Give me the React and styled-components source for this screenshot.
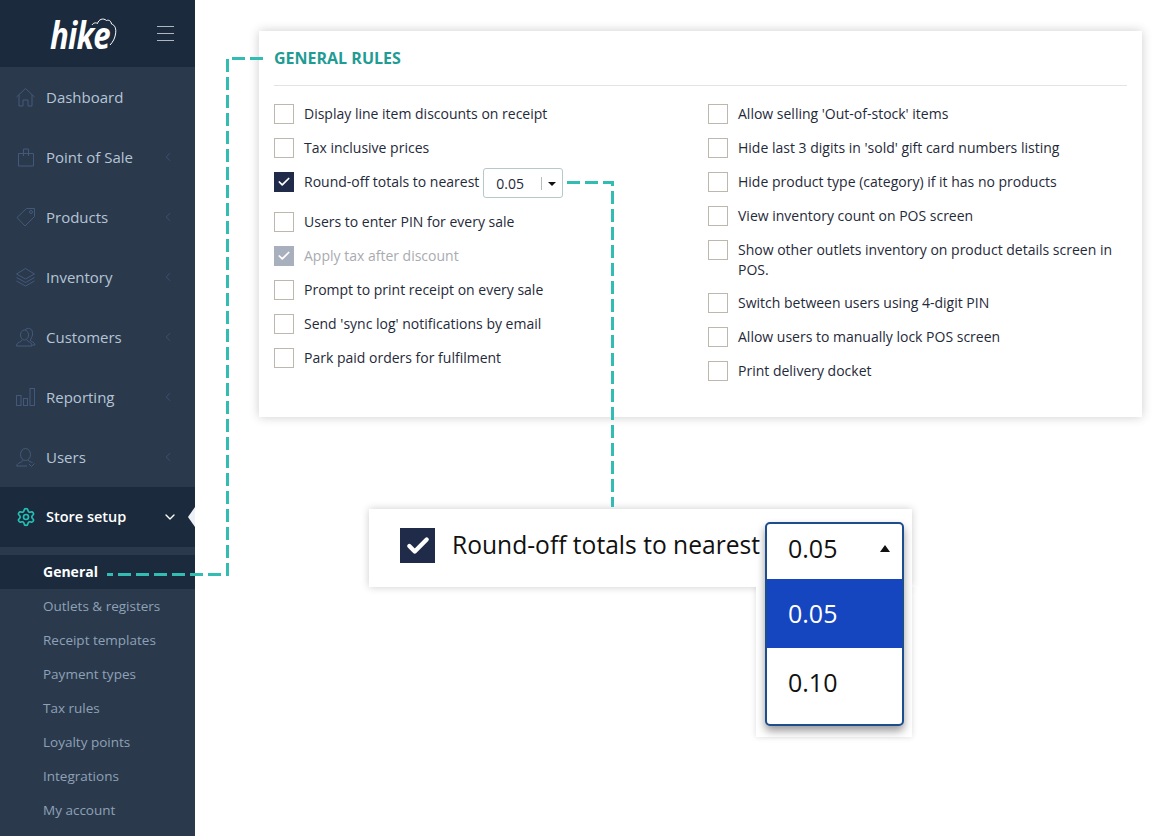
import styled, { createGlobalStyle } from "styled-components";
import { ChevronLeft, ChevronDown, Check, Settings } from "lucide-react";

const GlobalStyle = createGlobalStyle`
  html, body {
    margin: 0;
    padding: 0;
    background: #fff;
    font-family: "Open Sans", "Liberation Sans", sans-serif;
  }
`;

// thin outline icons used in the sidebar
const Icon = ({ children }) => (
  <svg width="20" height="20" viewBox="0 0 20 20" fill="none" stroke="#44597a" strokeWidth="1">
    {children}
  </svg>
);

const HomeIcon = () => (
  <Icon>
    <path d="M0.5 10 L9.5 1.5 L18.5 10" />
    <path d="M3 8 V19 H7 V13 H12 V19 H16 V8" />
  </Icon>
);

const BagIcon = () => (
  <Icon>
    <path d="M2.5 6.5 H17.5 V19 H2.5 Z" />
    <path d="M7.5 9 V2 H12.5 V9" />
  </Icon>
);

const TagIcon = () => (
  <Icon>
    <path d="M1 10.5 L10.5 1.5 H18.5 V9.5 L9 19 Z" />
    <circle cx="15" cy="5" r="1.5" />
  </Icon>
);

const LayersIcon = () => (
  <Icon>
    <path d="M0.5 7 L9.5 1.5 L18.5 7 L9.5 12 Z" />
    <path d="M0.5 10.5 L9.5 15.5 L18.5 10.5" />
    <path d="M0.5 14 L9.5 19 L18.5 14" />
  </Icon>
);

const CustomersIcon = () => (
  <Icon>
    <ellipse cx="8.5" cy="8" rx="4" ry="5" />
    <path d="M6 13 C6 15 1 15 0.5 18 V19 H16 V18 C16 15 11 15 11 13" />
    <path d="M9 3 C10 1.5 12 1 13.5 1.5 C16 2 17 5 16.5 8 C16 10 15 12 14 13 C15 15 19 15 19 18 H16.5" />
  </Icon>
);

const BarsIcon = () => (
  <Icon>
    <rect x="0.5" y="8.5" width="4.5" height="10" />
    <rect x="7.5" y="11.5" width="4" height="7" />
    <rect x="14" y="1.5" width="4.5" height="17" />
  </Icon>
);

const UserIcon = () => (
  <Icon>
    <ellipse cx="9.5" cy="7.5" rx="5" ry="6" />
    <path d="M7 13 C7 15.5 1 15.5 0.5 19 H11" />
    <path d="M12 13 C12.5 14.5 15 15 16.5 15.5" />
    <path d="M13 17 L15.5 19.5 L18.5 16.5" />
  </Icon>
);

const menu = [
  { name: "Dashboard", icon: HomeIcon },
  { name: "Point of Sale", icon: BagIcon, arrow: true },
  { name: "Products", icon: TagIcon, arrow: true },
  { name: "Inventory", icon: LayersIcon, arrow: true },
  { name: "Customers", icon: CustomersIcon, arrow: true },
  { name: "Reporting", icon: BarsIcon, arrow: true },
  { name: "Users", icon: UserIcon, arrow: true },
];

const subMenu = ["Outlets & registers", "Receipt templates", "Payment types", "Tax rules", "Loyalty points", "Integrations", "My account"];

const leftRules = [
  { label: "Display line item discounts on receipt" },
  { label: "Tax inclusive prices" },
  { label: "Round-off totals to nearest", checked: true, select: true },
  { label: "Users to enter PIN for every sale" },
  { label: "Apply tax after discount", disabled: true },
  { label: "Prompt to print receipt on every sale" },
  { label: "Send 'sync log' notifications by email" },
  { label: "Park paid orders for fulfilment" },
];

const rightRules = [
  "Allow selling 'Out-of-stock' items",
  "Hide last 3 digits in 'sold' gift card numbers listing",
  "Hide product type (category) if it has no products",
  "View inventory count on POS screen",
  "Show other outlets inventory on product details screen in POS.",
  "Switch between users using 4-digit PIN",
  "Allow users to manually lock POS screen",
  "Print delivery docket",
];

const App = () => {
  return (
    <Page>
      <GlobalStyle />
      <Sidebar>
        <Brand>
          <Logo>
            <LogoText>hike</LogoText>
            <svg width="26" height="30" viewBox="0 0 26 30" fill="none" stroke="#fff" strokeWidth="1">
              <path d="M1 8 C2.5 5.5 5 5.5 6.5 6.5 C7.5 2.5 12 0.5 15.5 3.5 C18 2.5 20 4 20.5 7 C24 8 25.5 12 24.5 17 C24 21 22 25 19 28" />
            </svg>
          </Logo>
          <Burger>
            <span />
            <span />
            <span />
          </Burger>
        </Brand>
        {menu.map((item) => (
          <NavItem key={item.name}>
            <item.icon />
            <NavLabel>{item.name}</NavLabel>
            {item.arrow && <ChevronLeft size={14} strokeWidth={1.3} color="#44597a" />}
          </NavItem>
        ))}
        <ActiveItem>
          <Settings size={20} strokeWidth={2} color="#22c1b4" />
          <ActiveLabel>Store setup</ActiveLabel>
          <ChevronDown size={16} strokeWidth={2} color="#fff" />
        </ActiveItem>
        <SubList>
          <SubItem $active>General</SubItem>
          {subMenu.map((name) => (
            <SubItem key={name}>{name}</SubItem>
          ))}
        </SubList>
      </Sidebar>

      <Main>
        <RulesCard>
          <CardTitle>GENERAL RULES</CardTitle>
          <Columns>
            <RuleColumn>
              {leftRules.map((rule) => (
                <Rule key={rule.label} $disabled={rule.disabled}>
                  <Box $checked={rule.checked} $disabled={rule.disabled}>
                    {(rule.checked || rule.disabled) && <Check size={14} strokeWidth={3} color="#fff" />}
                  </Box>
                  <span>{rule.label}</span>
                  {rule.select && (
                    <MiniSelect>
                      <span>0.05</span>
                      <MiniArrow />
                    </MiniSelect>
                  )}
                </Rule>
              ))}
            </RuleColumn>
            <RuleColumn>
              {rightRules.map((label) => (
                <Rule key={label}>
                  <Box />
                  <span>{label}</span>
                </Rule>
              ))}
            </RuleColumn>
          </Columns>
        </RulesCard>

        <Callout>
          <BigBox>
            <Check size={26} strokeWidth={4} color="#fff" />
          </BigBox>
          <BigLabel>Round-off totals to nearest</BigLabel>
          <Dropdown>
            <DropHead>
              0.05
              <UpArrow />
            </DropHead>
            <DropList>
              <DropOption $selected>0.05</DropOption>
              <DropOption>0.10</DropOption>
            </DropList>
          </Dropdown>
        </Callout>
      </Main>

      <Connectors width="1156" height="836" fill="none" stroke="#33bdb2" strokeWidth="3" strokeDasharray="13 5">
        <path d="M263 58.5 H227.5 V574.5 H107" />
        <path d="M567 182.5 H612.5 V507" />
      </Connectors>
    </Page>
  );
};

const Page = styled.div`
  position: relative;
  display: flex;
  width: 1156px;
  height: 836px;
  overflow: hidden;
  background: #fff;
`;

const Sidebar = styled.aside`
  flex: 0 0 195px;
  background: #2a3a4c;
`;

const Brand = styled.div`
  display: flex;
  align-items: center;
  height: 67px;
  padding: 0 21px 0 50px;
  background: #1b2a3d;
`;

const Logo = styled.div`
  display: flex;
  align-items: flex-start;
  flex: 1;
  svg {
    margin: 3px 0 0 -32px;
  }
`;

const LogoText = styled.span`
  font-family: "Open Sans", sans-serif;
  font-size: 38px;
  font-weight: 700;
  font-style: italic;
  line-height: 40px;
  letter-spacing: -1px;
  color: #fff;
  transform: scaleX(0.82);
  transform-origin: left center;
`;

const Burger = styled.div`
  display: flex;
  flex-direction: column;
  gap: 6px;
  width: 17px;
  span {
    height: 1px;
    background: #aeb7c1;
  }
`;

const NavItem = styled.div`
  display: flex;
  align-items: center;
  height: 60px;
  padding: 0 20px 0 16px;
`;

const NavLabel = styled.span`
  flex: 1;
  margin-left: 10px;
  font-size: 15px;
  color: #b6c4d6;
`;

const ActiveItem = styled(NavItem)`
  position: relative;
  padding-right: 17px;
  background: #1b2a3d;
  &::after {
    content: "";
    position: absolute;
    right: 0;
    top: 20px;
    border: 10px solid transparent;
    border-left-width: 0;
    border-right: 7px solid #eef1f6;
  }
`;

const ActiveLabel = styled(NavLabel)`
  padding-bottom: 2px;
  font-size: 14.5px;
  font-weight: 600;
  color: #fff;
`;

const SubList = styled.div`
  display: flex;
  flex-direction: column;
  padding-top: 8px;
`;

const SubItem = styled.div`
  height: 34px;
  padding-left: 43px;
  line-height: 34px;
  font-size: ${(p) => (p.$active ? "14px" : "13.5px")};
  font-weight: ${(p) => (p.$active ? 700 : 400)};
  color: ${(p) => (p.$active ? "#fff" : "#8fa1b7")};
  background: ${(p) => (p.$active ? "#1b2a3d" : "transparent")};
`;

const Main = styled.main`
  flex: 1;
  padding: 31px 14px 0 64px;
`;

const RulesCard = styled.section`
  height: 386px;
  box-sizing: border-box;
  padding: 0 15px;
  background: #fff;
  box-shadow: 0 0 10px rgba(0, 0, 0, 0.2);
`;

const CardTitle = styled.h2`
  margin: 0;
  height: 54px;
  border-bottom: 1px solid #e3e3e3;
  font-size: 16px;
  font-weight: 700;
  line-height: 54px;
  color: #1f9c94;
`;

const Columns = styled.div`
  display: grid;
  grid-template-columns: 434px 1fr;
  padding-top: 18px;
`;

const RuleColumn = styled.div`
  display: flex;
  flex-direction: column;
  gap: 14px;
`;

const Rule = styled.label`
  display: flex;
  align-items: flex-start;
  font-size: 14px;
  line-height: 19.5px;
  color: ${(p) => (p.$disabled ? "#a9abaf" : "#1f2a3a")};
`;

const Box = styled.span`
  flex: none;
  display: flex;
  align-items: center;
  justify-content: center;
  box-sizing: border-box;
  width: 20px;
  height: 20px;
  margin-right: 10px;
  border: 1px solid ${(p) => (p.$checked ? "#202b4a" : p.$disabled ? "#a9b0bd" : "#bdb7b0")};
  background: ${(p) => (p.$checked ? "#202b4a" : p.$disabled ? "#a9b0bd" : "#fff")};
`;

const MiniSelect = styled.div`
  display: flex;
  align-items: center;
  box-sizing: border-box;
  width: 80px;
  height: 30px;
  margin: -4px 0 0 4px;
  padding: 2px 6px 0 12px;
  border: 1px solid #b5c9c9;
  border-radius: 3px;
  color: #1f2a3a;
  span {
    flex: 1;
  }
`;

const MiniArrow = styled.i`
  position: relative;
  width: 0;
  height: 0;
  margin-left: 5px;
  border: 4px solid transparent;
  border-top: 4px solid #111;
  border-bottom: 0;
  &::before {
    content: "";
    position: absolute;
    left: -11px;
    top: -9px;
    width: 1px;
    height: 13px;
    background: #b5bcc0;
  }
`;

const Callout = styled.section`
  position: relative;
  display: flex;
  align-items: flex-start;
  box-sizing: border-box;
  width: 543px;
  height: 78px;
  margin: 92px 0 0 110px;
  padding: 19px 0 0 31px;
  background: #fff;
  box-shadow: 0 0 8px rgba(0, 0, 0, 0.2);
  &::after {
    content: "";
    position: absolute;
    left: 387px;
    right: 0;
    top: 78px;
    height: 150px;
    background: #fff;
    box-shadow: 0 0 6px rgba(0, 0, 0, 0.14);
    clip-path: inset(0 -10px -10px -10px);
  }
`;

const BigBox = styled.span`
  flex: none;
  display: flex;
  align-items: center;
  justify-content: center;
  width: 35px;
  height: 35px;
  background: #202b4a;
`;

const BigLabel = styled.span`
  margin-left: 17px;
  font-size: 24.6px;
  line-height: 33px;
  color: #111;
`;

const Dropdown = styled.div`
  position: absolute;
  z-index: 1;
  left: 396px;
  top: 13px;
  box-sizing: border-box;
  width: 139px;
  height: 204px;
  border: 2px solid #1b4d8f;
  border-radius: 5px;
  background: #fff;
  box-shadow: 0 5px 8px rgba(0, 0, 0, 0.4);
`;

const DropHead = styled.div`
  display: flex;
  align-items: center;
  justify-content: space-between;
  box-sizing: border-box;
  height: 55px;
  padding: 0 12px 7px 21px;
  font-size: 25px;
  color: #111;
`;

const UpArrow = styled.i`
  width: 0;
  height: 0;
  border: 5.5px solid transparent;
  border-bottom: 7px solid #111;
  border-top: 0;
`;

const DropList = styled.div`
  display: flex;
  flex-direction: column;
`;

const DropOption = styled.div`
  height: 69px;
  padding-left: 21px;
  font-size: 25px;
  line-height: 69px;
  color: ${(p) => (p.$selected ? "#fff" : "#111")};
  background: ${(p) => (p.$selected ? "#1546bf" : "transparent")};
`;

const Connectors = styled.svg`
  position: absolute;
  left: 0;
  top: 0;
  pointer-events: none;
`;

export default App;
